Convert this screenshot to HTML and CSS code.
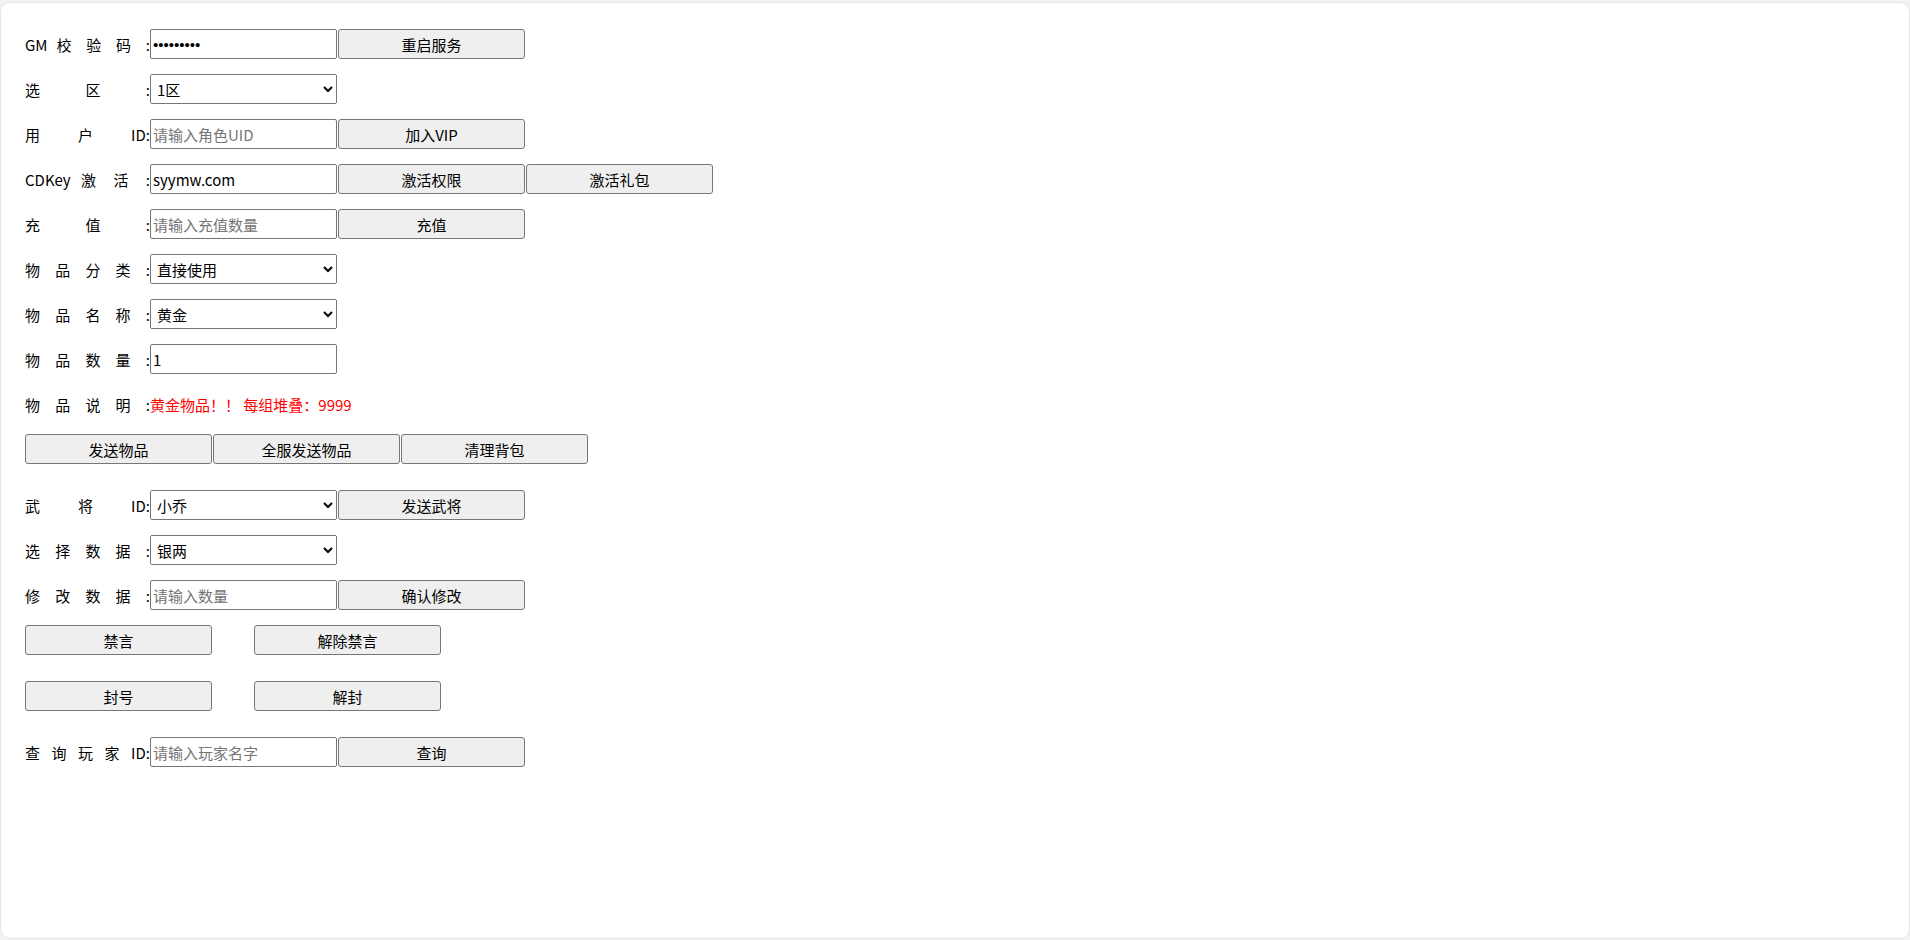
FILE: index.html
```html
<!DOCTYPE html>
<html lang="zh-CN">
<head>
  <meta charset="UTF-8" />
  <title>GM 管理</title>
  <link rel="stylesheet" href="styles.css">
</head>
<body>

  <div class="panel">

    <div class="row">
      <label class="label">GM 校 验 码 :</label>
      <input type="password" class="field" value="123456789">
      <button class="btn">重启服务</button>
    </div>

    <div class="row">
      <label class="label">选 区 :</label>
      <select class="field">
        <option>1区</option>
        <option>2区</option>
      </select>
    </div>

    <div class="row">
      <label class="label">用 户 ID:</label>
      <input type="text" class="field" placeholder="请输入角色UID">
      <button class="btn">加入VIP</button>
    </div>

    <div class="row">
      <label class="label">CDKey 激 活 :</label>
      <input type="text" class="field" value="syymw.com">
      <button class="btn">激活权限</button>
      <button class="btn">激活礼包</button>
    </div>

    <div class="row">
      <label class="label">充 值 :</label>
      <input type="text" class="field" placeholder="请输入充值数量">
      <button class="btn">充值</button>
    </div>

    <div class="row">
      <label class="label">物 品 分 类 :</label>
      <select class="field">
        <option>直接使用</option>
      </select>
    </div>

    <div class="row">
      <label class="label">物 品 名 称 :</label>
      <select class="field">
        <option>黄金</option>
      </select>
    </div>

    <div class="row">
      <label class="label">物 品 数 量 :</label>
      <input type="text" class="field" value="1">
    </div>

    <div class="row">
      <label class="label">物 品 说 明 :</label>
      <span class="desc">黄金物品！！ 每组堆叠：9999</span>
    </div>

    <div class="row spaced">
      <button class="btn">发送物品</button>
      <button class="btn">全服发送物品</button>
      <button class="btn">清理背包</button>
    </div>

    <div class="row">
      <label class="label">武 将 ID:</label>
      <select class="field">
        <option>小乔</option>
      </select>
      <button class="btn">发送武将</button>
    </div>

    <div class="row">
      <label class="label">选 择 数 据 :</label>
      <select class="field">
        <option>银两</option>
      </select>
    </div>

    <div class="row">
      <label class="label">修 改 数 据 :</label>
      <input type="text" class="field" placeholder="请输入数量">
      <button class="btn">确认修改</button>
    </div>

    <div class="row spaced pair">
      <button class="btn">禁言</button>
      <button class="btn">解除禁言</button>
    </div>

    <div class="row spaced pair">
      <button class="btn">封号</button>
      <button class="btn">解封</button>
    </div>

    <div class="row">
      <label class="label">查 询 玩 家 ID:</label>
      <input type="text" class="field" placeholder="请输入玩家名字">
      <button class="btn">查询</button>
    </div>

  </div>

</body>
</html>
```

FILE: styles.css
```css
body {
  margin: 0;
  padding-top: 2px;
  background: #f2f2f2;
  font-family: "Noto Sans CJK SC", "Noto Sans", sans-serif;
  font-size: 15px;
  color: #000;
}

.panel {
  height: 937px;
  box-sizing: border-box;
  background: #fff;
  border: 1px solid #e6e6e6;
  border-radius: 10px;
  padding: 26px 24px;
}

.row {
  display: flex;
  align-items: center;
  height: 30px;
  margin-bottom: 15px;
}

.row.spaced {
  margin-bottom: 26px;
}

.label {
  width: 125px;
  text-align: justify;
  text-align-last: justify;
  white-space: nowrap;
}

.field {
  width: 187px;
  height: 30px;
  box-sizing: border-box;
  font-family: inherit;
  font-size: 15px;
  color: #000;
  margin: 0;
}

input.field {
  padding: 1px 2px;
  border: 1px solid #767676;
  border-radius: 2px;
}

input[type="password"].field {
  font-family: "Liberation Sans", sans-serif;
}

input.field::placeholder {
  color: #757575;
}

select.field {
  padding: 0 2px;
}

.btn {
  width: 187px;
  height: 30px;
  box-sizing: border-box;
  margin: 0 0 0 1px;
  padding: 0 6px;
  background: #efefef;
  border: 1px solid #767676;
  border-radius: 3px;
  font-family: inherit;
  font-size: 15px;
  color: #000;
  cursor: pointer;
}

.btn:first-child {
  margin-left: 0;
}

.btn:hover {
  background: #e5e5e5;
}

.pair .btn + .btn {
  margin-left: 42px;
}

.desc {
  color: #ff0000;
}
```
